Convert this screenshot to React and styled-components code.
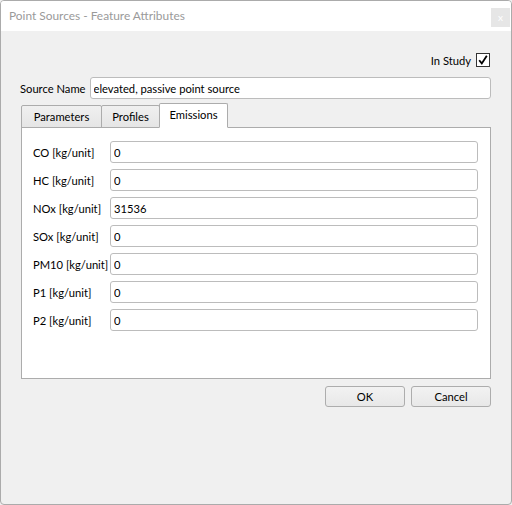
import React, { useState } from "react";
import styled, { createGlobalStyle } from "styled-components";

const GlobalStyle = createGlobalStyle`
  html, body {
    margin: 0;
    padding: 0;
    background: #f0f0f0;
  }
  * {
    box-sizing: border-box;
  }
`;

const Window = styled.div`
  width: 512px;
  height: 505px;
  border: 1px solid #ababab;
  border-radius: 4px;
  background: #f0f0f0;
  display: flex;
  flex-direction: column;
  overflow: hidden;
  font-family: Lato, "Liberation Sans", sans-serif;
  font-size: 11.2px;
  color: #000;
`;

const TitleBar = styled.div`
  height: 30px;
  background: #fff;
  display: flex;
  align-items: center;
  justify-content: space-between;
  padding: 0 1px 0 8px;
`;

const Title = styled.span`
  color: #9a9a9a;
  font-size: 11.9px;
  margin-top: -1px;
`;

const CloseButton = styled.div`
  width: 19px;
  height: 19px;
  margin-top: 2px;
  background: #e6e6e6;
  color: #fff;
  font-size: 10px;
  display: flex;
  align-items: center;
  justify-content: center;
`;

const Body = styled.div`
  flex: 1;
  padding: 22px 20px 0 19px;
  display: flex;
  flex-direction: column;
`;

const StudyRow = styled.div`
  display: flex;
  justify-content: flex-end;
  align-items: center;
  gap: 5px;
  height: 14px;
  padding-right: 1px;
`;

const CheckBox = styled.div`
  width: 14px;
  height: 14px;
  border: 1px solid #333;
  background: #fff;
  display: flex;
  align-items: center;
  justify-content: center;
`;

const NameRow = styled.div`
  display: flex;
  align-items: center;
  margin-top: 10px;
  gap: 4px;
`;

const TextInput = styled.input`
  height: 22px;
  border: 1px solid #bcbcbc;
  border-radius: 3px;
  background: #fff;
  font-family: inherit;
  font-size: 11.2px;
  color: #000;
  padding: 0 3px;
  outline: none;
  min-width: 0;
  flex: ${(p) => (p.$grow ? 1 : "none")};
  width: ${(p) => (p.$grow ? "auto" : "368px")};
`;

const Tabs = styled.div`
  margin-top: 4px;
  margin-left: 1px;
  display: flex;
  flex-direction: column;
`;

const TabBar = styled.div`
  display: flex;
  align-items: flex-end;
  height: 25px;
  position: relative;
  z-index: 1;
  margin-bottom: -1px;
`;

const Tab = styled.div`
  height: ${(p) => (p.$active ? "25px" : "23px")};
  width: ${(p) => p.$w}px;
  border: 1px solid #acacac;
  border-bottom: ${(p) => (p.$active ? "1px solid #fff" : "1px solid #acacac")};
  margin-left: ${(p) => (p.$first ? "0" : "-1px")};
  border-radius: 2px 2px 0 0;
  background: ${(p) =>
    p.$active ? "#fff" : "linear-gradient(#f0f0f0, #e5e5e5)"};
  display: flex;
  align-items: center;
  justify-content: center;
  padding-bottom: ${(p) => (p.$active ? "2px" : "0")};
  cursor: default;
`;

const Pane = styled.div`
  width: 470px;
  height: 252px;
  border: 1px solid #acacac;
  background: #fff;
  padding: 13px 12px 0 11px;
  display: grid;
  grid-template-columns: 77px 368px;
  grid-auto-rows: 22px;
  row-gap: 6px;
  align-items: center;
`;

const FieldLabel = styled.label`
  white-space: nowrap;
`;

const ButtonRow = styled.div`
  display: flex;
  justify-content: flex-end;
  gap: 6px;
  margin-top: 7px;
`;

const Button = styled.button`
  width: 80px;
  height: 21px;
  border: 1px solid #adadad;
  border-radius: 3px;
  background: linear-gradient(#f2f2f2, #e8e8e8);
  font-family: inherit;
  font-size: 11.2px;
  color: #000;
  padding: 0;
`;

const fields = [
  ["CO [kg/unit]", "0"],
  ["HC [kg/unit]", "0"],
  ["NOx [kg/unit]", "31536"],
  ["SOx [kg/unit]", "0"],
  ["PM10 [kg/unit]", "0"],
  ["P1 [kg/unit]", "0"],
  ["P2 [kg/unit]", "0"],
];

export default function App() {
  const [tab, setTab] = useState(2);
  const tabs = [
    ["Parameters", 81],
    ["Profiles", 59],
    ["Emissions", 69],
  ];
  return (
    <>
      <GlobalStyle />
      <Window>
        <TitleBar>
          <Title>Point Sources - Feature Attributes</Title>
          <CloseButton>x</CloseButton>
        </TitleBar>
        <Body>
          <StudyRow>
            <span>In Study</span>
            <CheckBox>
              <svg width="10" height="10" viewBox="0 0 10 10">
                <path
                  d="M1.2 5.2 L3.8 8.4 L8.8 0.8"
                  fill="none"
                  stroke="#000"
                  strokeWidth="1.8"
                />
              </svg>
            </CheckBox>
          </StudyRow>
          <NameRow>
            <span>Source Name</span>
            <TextInput $grow defaultValue="elevated, passive point source" />
          </NameRow>
          <Tabs>
            <TabBar>
              {tabs.map(([name, w], i) => (
                <Tab
                  key={name}
                  $w={w}
                  $first={i === 0}
                  $active={tab === i}
                  onClick={() => setTab(i)}
                >
                  {name}
                </Tab>
              ))}
            </TabBar>
            <Pane>
              {fields.map(([label, value]) => (
                <React.Fragment key={label}>
                  <FieldLabel>{label}</FieldLabel>
                  <TextInput defaultValue={value} />
                </React.Fragment>
              ))}
            </Pane>
          </Tabs>
          <ButtonRow>
            <Button>OK</Button>
            <Button>Cancel</Button>
          </ButtonRow>
        </Body>
      </Window>
    </>
  );
}
